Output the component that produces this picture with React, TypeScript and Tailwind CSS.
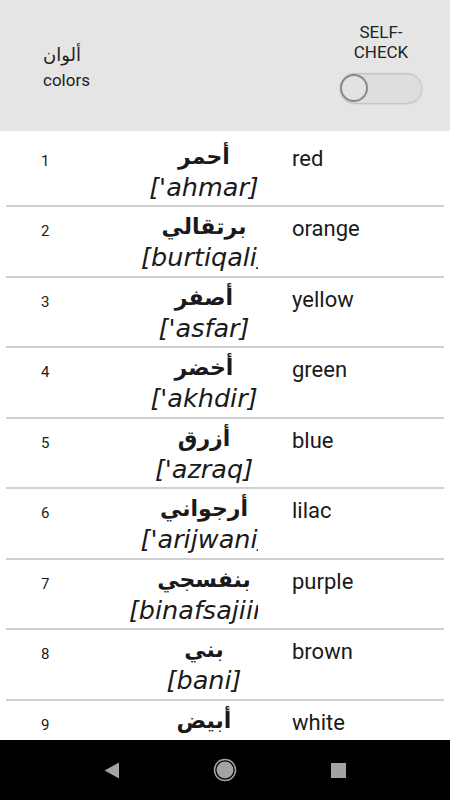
const words = [
  { n: 1, ar: "أحمر", tr: "['ahmar]", en: "red" },
  { n: 2, ar: "برتقالي", tr: "[burtiqali]", en: "orange" },
  { n: 3, ar: "أصفر", tr: "['asfar]", en: "yellow" },
  { n: 4, ar: "أخضر", tr: "['akhdir]", en: "green" },
  { n: 5, ar: "أزرق", tr: "['azraq]", en: "blue" },
  { n: 6, ar: "أرجواني", tr: "['arijwani]", en: "lilac" },
  { n: 7, ar: "بنفسجي", tr: "[binafsajiin]", en: "purple" },
  { n: 8, ar: "بني", tr: "[bani]", en: "brown" },
  { n: 9, ar: "أبيض", tr: "['abyad]", en: "white" },
];

function Toggle() {
  return (
    <div className="relative w-[82px] h-[30px] rounded-full bg-[#dedede] shadow-[inset_0_1px_2px_rgba(0,0,0,0.15),0_1px_2px_rgba(0,0,0,0.2)]">
      <div className="absolute left-0 top-[1px] w-[28px] h-[28px] rounded-full bg-[#e2e2e2] border-2 border-[#8a8a8a]" />
    </div>
  );
}

function WordRow({ n, ar, tr, en }: { n: number; ar: string; tr: string; en: string }) {
  return (
    <div>
      <div className="flex h-[68.5px] text-[#1a1a1a]">
        <div className="w-[100px] pl-[41px] pt-[14px] text-[15px] leading-[20px] font-['Roboto',sans-serif]">
          {n}
        </div>
        <div className="w-[158px] overflow-hidden pl-[50px]">
          <div className="w-[108px] flex flex-col items-center pt-[7px]">
            <div
              dir="rtl"
              className="whitespace-nowrap text-[22px] leading-[26px] font-bold font-['DejaVu_Sans',sans-serif]"
            >
              {ar}
            </div>
            <div className="mt-[2px] whitespace-nowrap text-[25.5px] leading-[30px] italic font-['DejaVu_Sans',sans-serif]">
              {tr}
            </div>
          </div>
        </div>
        <div className="pl-[34px] pt-[8px] text-[22px] leading-[28px] font-['Roboto',sans-serif]">
          {en}
        </div>
      </div>
      <div className="mx-[6px] h-[2px] bg-[#d0d0d0]" />
    </div>
  );
}

export default function App() {
  return (
    <div className="flex flex-col w-[450px] h-[800px] overflow-hidden bg-white">
      <header className="h-[131px] shrink-0 bg-[#e5e5e5] flex flex-row justify-between text-[#222]">
        <div className="pl-[43px] pt-[42px] flex flex-col">
          <div dir="rtl" className="text-[18px] leading-[26px] self-start font-['DejaVu_Sans',sans-serif]">
            ألوان
          </div>
          <div className="text-[17px] leading-[24px] font-['Roboto',sans-serif]">colors</div>
        </div>
        <div className="w-[82px] mr-[28px] pt-[22px] flex flex-col items-center">
          <div className="text-[17px] leading-[20px] text-center font-['Roboto',sans-serif]">
            SELF-
            <br />
            CHECK
          </div>
          <div className="mt-[11px]">
            <Toggle />
          </div>
        </div>
      </header>
      <main className="flex-1 overflow-hidden pt-[5.5px]">
        {words.map((w) => (
          <WordRow key={w.n} {...w} />
        ))}
      </main>
      <nav className="h-[60px] shrink-0 bg-black flex flex-row items-center">
        <div className="w-[225px] flex justify-end pr-[105px]">
          <svg width="16" height="17" viewBox="0 0 16 17">
            <path d="M15 0.5 L15 16.5 L0.5 8.5 Z" fill="#a3a3a3" />
          </svg>
        </div>
        <svg width="24" height="24" viewBox="0 0 24 24" className="-ml-[12px]">
          <circle cx="12" cy="12" r="10.5" fill="none" stroke="#a3a3a3" strokeWidth="1.5" />
          <circle cx="12" cy="12" r="8.5" fill="#a3a3a3" />
        </svg>
        <div className="ml-[94px] w-[15px] h-[15px] bg-[#a3a3a3]" />
      </nav>
    </div>
  );
}
